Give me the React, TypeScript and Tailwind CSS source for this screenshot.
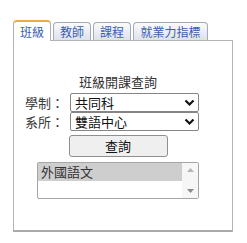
import { useState } from 'react';

const tabs = [
  { label: '班級', w: 'w-[38px]' },
  { label: '教師', w: 'w-[38px]' },
  { label: '課程', w: 'w-[38px]' },
  { label: '就業力指標', w: 'w-[75px]' },
];

function Chevron() {
  return (
    <svg width="11" height="8" viewBox="0 0 11 8" className="absolute right-[3px] top-[5px]">
      <path d="M1.5 1.5 L5.5 5.5 L9.5 1.5" fill="none" stroke="#111" strokeWidth="2.2" />
    </svg>
  );
}

function SelectRow({ label, value }: { label: string; value: string }) {
  return (
    <div className="flex items-center h-[19px]">
      <span className="w-[39px] mr-[6px] text-[13px] leading-[19px] text-[#3a3a3a]">{label}</span>
      <div className="relative w-[129px] h-[19px] border border-[#858585] rounded-[2px] bg-white">
        <span className="block pl-[4px] text-[13px] leading-[17px] text-[#111]">{value}</span>
        <Chevron />
      </div>
    </div>
  );
}

export default function App() {
  const [active, setActive] = useState(0);

  return (
    <div
      className="w-[247px] h-[243px] bg-white pt-[20px] pl-[13px]"
      style={{ fontFamily: '"Noto Sans CJK TC", "Noto Sans", sans-serif' }}
    >
      {/* tab strip */}
      <div className="flex items-end gap-[2px] h-[20px] relative z-10">
        {tabs.map((t, i) =>
          i === active ? (
            <button
              key={t.label}
              onClick={() => setActive(i)}
              className={`${t.w} h-[21px] -mb-px bg-white border-x border-t-2 border-[#b0b0b0] border-t-[#f2a93b] rounded-t-[4px] text-[12px] leading-[16px] text-[#3b60b4]`}
            >
              {t.label}
            </button>
          ) : (
            <button
              key={t.label}
              onClick={() => setActive(i)}
              className={`${t.w} h-[18px] bg-gradient-to-b from-[#fbfbfd] to-[#dde1ea] border border-b-0 border-[#a3aabb] rounded-t-[4px] text-[12px] leading-[16px] text-[#3b60b4]`}
            >
              {t.label}
            </button>
          )
        )}
      </div>

      {/* panel */}
      <div className="w-[220px] h-[192px] border border-[#b3b3b3] border-b-2 border-b-[#a9a9a9] bg-white">
        <div className="pt-[33px] flex flex-col">
          <div className="ml-[23px] w-[162px] text-center text-[13px] leading-[16px] text-[#333]">
            班級開課查詢
          </div>
          <div className="mt-[3px] ml-[11px]">
            <SelectRow label="學制：" value="共同科" />
            <SelectRow label="系所：" value="雙語中心" />
          </div>
          <div className="ml-[23px] w-[162px] flex flex-col items-center">
            <button className="mt-[4px] w-[99px] h-[22px] bg-[#efefef] border border-[#8f8f8f] rounded-[3px] text-[13px] leading-[18px] text-[#111]">
              查詢
            </button>
            <div className="mt-[5px] w-[162px] h-[37px] border border-[#a5a5a5] rounded-[2px] flex bg-white">
              <div className="flex-1">
                <div className="h-[18px] bg-[#cecece] pl-[3px] text-[13px] leading-[18px] text-[#333]">
                  外國語文
                </div>
              </div>
              <div className="w-[16px] bg-[#f6f6f6] flex flex-col items-center justify-between py-[5px]">
                <svg width="7" height="4" viewBox="0 0 7 4">
                  <path d="M0 4 L3.5 0 L7 4 Z" fill="#b5b5b5" />
                </svg>
                <svg width="7" height="4" viewBox="0 0 7 4">
                  <path d="M0 0 L3.5 4 L7 0 Z" fill="#8a8a8a" />
                </svg>
              </div>
            </div>
          </div>
        </div>
      </div>
    </div>
  );
}
